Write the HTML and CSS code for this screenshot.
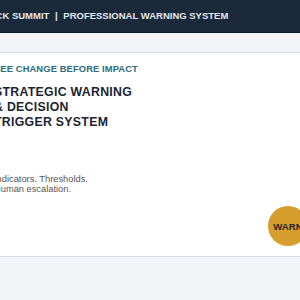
FILE: index.html
```html
<!DOCTYPE html>
<html lang="en">
<head>
    <meta charset="UTF-8">
    <meta name="viewport" content="width=device-width, initial-scale=1.0">
    <title>Black Summit</title>
    <link rel="stylesheet" href="styles.css">
</head>
<body>
    <header class="topbar">
        <div class="brand">BLACK SUMMIT <span class="sep">|</span> PROFESSIONAL WARNING SYSTEM</div>
    </header>

    <main class="page">
        <section class="hero">
            <p class="eyebrow">SEE CHANGE BEFORE IMPACT</p>
            <h1 class="title">STRATEGIC WARNING<br>&amp; DECISION<br>TRIGGER SYSTEM</h1>
            <p class="lead">Indicators. Thresholds.<br>Human escalation.</p>
            <div class="badge">WARN</div>
        </section>
    </main>
</body>
</html>
```

FILE: styles.css
```css
body {
    margin: 0;
    font-family: "Liberation Sans", Arial, sans-serif;
    background: #f2f4f7;
    overflow: hidden;
}
.topbar {
    height: 33px;
    padding-bottom: 2px;
    box-sizing: border-box;
    background: #1b2a3b;
    border-bottom: 1px solid #101b27;
    display: flex;
    align-items: center;
}
.brand {
    margin-left: -24px;
    font-size: 9.5px;
    font-weight: bold;
    color: #e3e8ee;
    white-space: nowrap;
}
.sep {
    margin: 0 3px;
}
.page {
    padding-top: 19px;
    margin: 0 -14px 0 -6px;
}
.hero {
    position: relative;
    height: 205px;
    background: #fff;
    border-top: 1px solid #d6dbe1;
    border-bottom: 1px solid #d6dbe1;
    padding: 10px 0 0 0;
    box-sizing: border-box;
}
.eyebrow {
    margin: 0;
    font-size: 9.4px;
    font-weight: bold;
    letter-spacing: 0.1px;
    color: #2e6b7c;
}
.title {
    margin: 11px 0 0 0;
    font-size: 12.3px;
    line-height: 15px;
    letter-spacing: 0.3px;
    color: #1b2433;
}
.lead {
    margin: 44px 0 0 0;
    font-size: 9.3px;
    line-height: 10px;
    color: #555;
}
.badge {
    position: absolute;
    right: 6px;
    bottom: 10px;
    width: 40px;
    height: 40px;
    border-radius: 50%;
    background: #d69d2f;
    color: #2a2620;
    font-size: 9.6px;
    font-weight: bold;
    display: flex;
    align-items: center;
    justify-content: center;
}
```
